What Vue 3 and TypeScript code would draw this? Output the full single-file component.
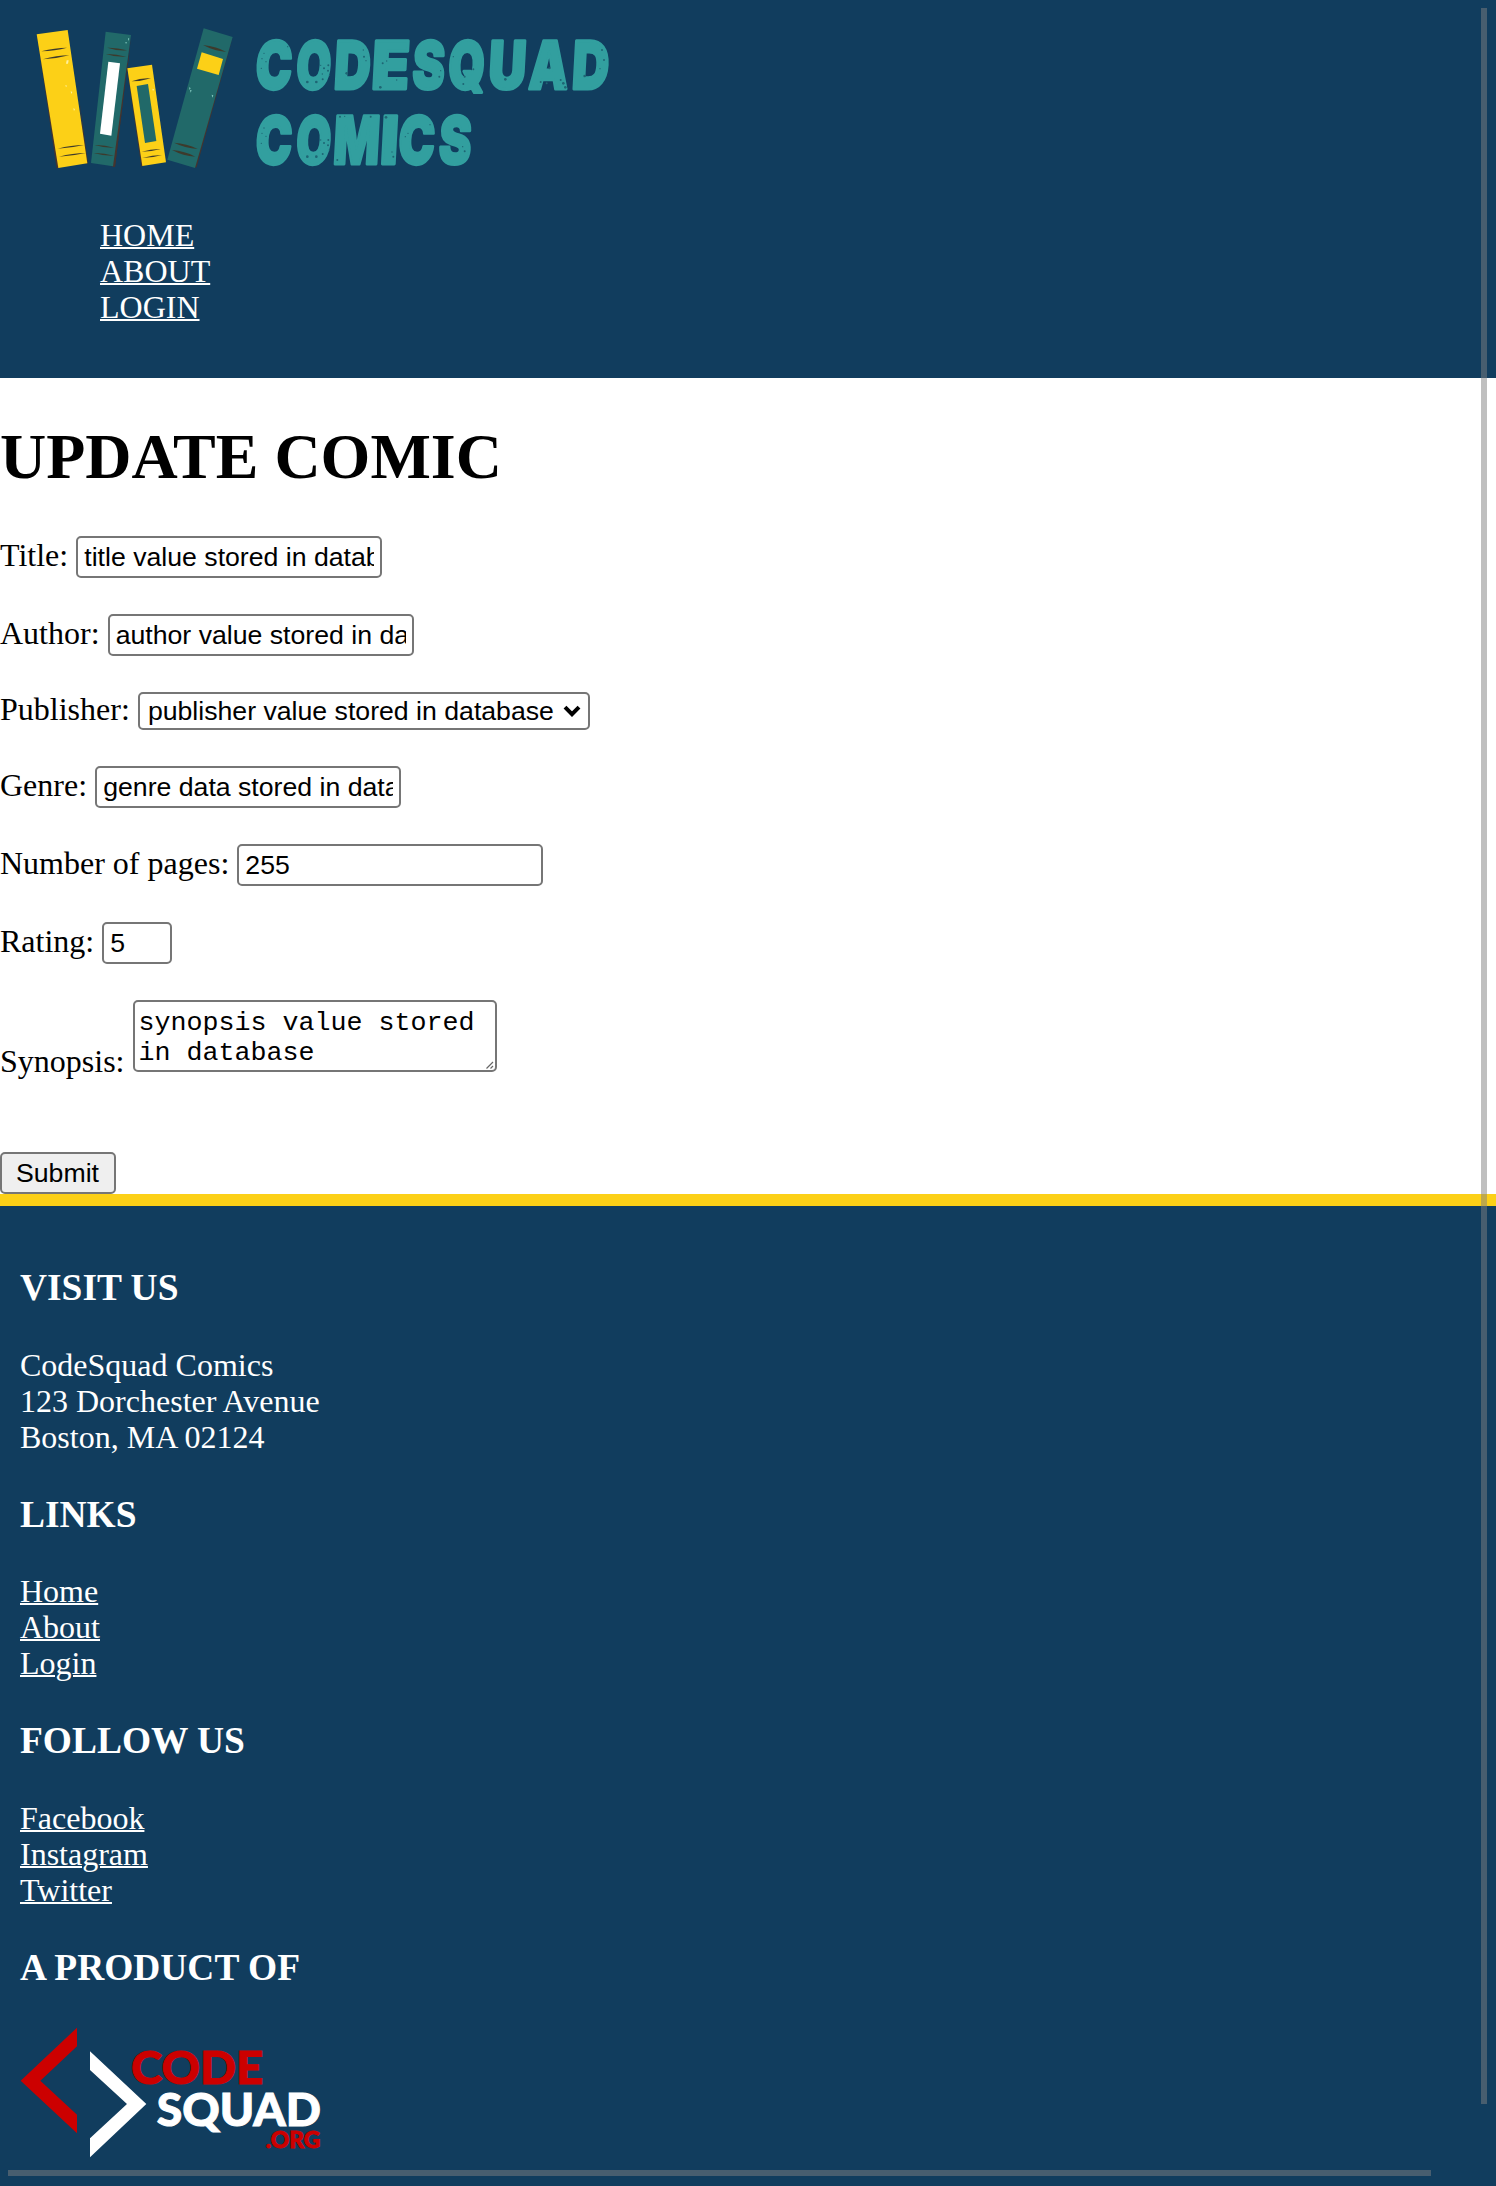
<script setup lang="ts">
import { ref } from 'vue'

const title = ref('title value stored in database')
const author = ref('author value stored in database')
const publisher = ref('publisher value stored in database')
const genre = ref('genre data stored in database')
const pages = ref(255)
const rating = ref(5)
const synopsis = ref('synopsis value stored in database')

const navLinks: string[] = ['HOME', 'ABOUT', 'LOGIN']
const siteLinks: string[] = ['Home', 'About', 'Login']
const socialLinks: string[] = ['Facebook', 'Instagram', 'Twitter']

interface Letter { ch: string; x: number; length: number }

// Share of the advance taken by the left bearing and by the ink of each letter
const metrics: Record<string, [number, number]> = {
  C: [0.045, 0.92], O: [0.045, 0.91], D: [0.07, 0.89], E: [0.09, 0.86], S: [0.04, 0.92],
  Q: [0.045, 0.91], U: [0.07, 0.86], A: [0.01, 0.98], M: [0.07, 0.86], I: [0.17, 0.66],
}
const stroke = 9
const layout = (word: string, edges: [number, number][]): Letter[] =>
  edges.map(([left, right], i) => {
    const [bearing, ink] = metrics[word[i]]
    const length = (right - left - stroke - 4) / ink
    return { ch: word[i], x: left + stroke / 2 - bearing * length, length }
  })
const lines = [
  {
    y: 268,
    letters: layout('CODESQUAD', [
      [767, 880], [888, 996], [1005, 1115], [1120, 1230], [1236, 1338],
      [1344, 1457], [1468, 1578], [1583, 1712], [1719, 1830],
    ]),
  },
  {
    y: 493,
    letters: layout('COMICS', [
      [767, 880], [888, 996], [1005, 1137], [1145, 1193], [1195, 1308], [1315, 1417],
    ]),
  },
]

// Worn print specks: x, y, radius
const specks: number[][] = [
  [786, 176, 2], [792, 160, 2], [798, 185, 2], [784, 205, 2], [863, 140, 2],
  [922, 246, 4], [949, 246, 4], [968, 238, 3], [972, 205, 3], [962, 196, 2], [985, 196, 3], [984, 212, 3], [967, 222, 2], [988, 226, 2],
  [1040, 220, 4], [1092, 170, 3], [1098, 182, 2], [1090, 150, 2], [1141, 262, 4], [1148, 190, 3], [1160, 183, 2], [1190, 240, 2],
  [1318, 230, 3], [1322, 212, 2], [1360, 170, 2], [1394, 230, 3], [1420, 208, 3], [1390, 252, 3],
  [1516, 238, 4], [1648, 205, 3], [1640, 250, 3], [1622, 246, 3], [1690, 250, 4], [1696, 262, 4], [1682, 240, 3],
  [1754, 228, 4], [1806, 150, 3], [1812, 180, 3], [1800, 206, 2],
  [786, 400, 2], [792, 384, 2], [798, 409, 2], [784, 430, 2],
  [922, 470, 4], [949, 470, 4], [968, 462, 3], [972, 429, 3], [962, 420, 2], [985, 420, 3], [984, 436, 3], [988, 450, 2],
  [1020, 350, 3], [1034, 349, 2], [1112, 350, 3], [1012, 480, 3], [1158, 352, 4], [1180, 470, 3], [1176, 456, 2],
  [1216, 410, 2], [1224, 400, 2], [1290, 374, 2], [1394, 454, 3], [1388, 440, 2],
]
</script>

<template>
  <div class="page">
    <header class="header">
      <svg class="brand" viewBox="60 60 1800 498" role="img" aria-label="CodeSquad Comics">
        <g>
          <path d="M111 106 L170 506 L180 500 L120 102Z" fill="#45342f" />
          <path d="M238 300 L264 490 L258 492Z" fill="#45342f" />
          <path d="M110 103 L203 90 L262 490 L175 504Z" fill="#fcd017" />
          <g class="band">
            <path d="M124 154 Q165 143 201 143 Q165 153 124 154Z" />
            <path d="M129 178 Q170 166 208 166 Q170 176 129 178Z" />
            <path d="M173 446 Q214 435 252 435 Q214 444 173 446Z" />
            <path d="M177 470 Q218 459 257 459 Q218 468 177 470Z" />
          </g>
          <path d="M200 181 l6 0 -2 10 -6 0Z M196 255 l5 2 -3 5Z M212 274 l5 2 -3 6Z M220 325 l5 2 -3 6Z" fill="#fff0a0" />
        </g>
        <g>
          <path d="M386 180 L393 105 L345 501 L335 499Z" fill="#45342f" />
          <path d="M383 190 L345 501 L338 499 L376 180Z" fill="#45342f" />
          <path d="M317 95 L393 105 L339 499 L273 489Z" fill="#216969" />
          <path d="M325 185 L360 190 L334 407 L300 401Z" fill="#fff" />
          <g class="band">
            <path d="M322 143 Q350 142 381 151 Q350 153 322 143Z" />
            <path d="M318 162 Q345 161 379 170 Q345 172 318 162Z" />
            <path d="M284 435 Q312 434 342 443 Q312 444 284 435Z" />
            <path d="M281 459 Q310 458 342 467 Q310 468 281 459Z" />
          </g>
          <path d="M384 114 l4 2 -3 7Z M376 126 l5 1 -3 5Z" fill="#83c9bf" />
        </g>
        <g>
          <path d="M381 205 L424 500 L430 498 L390 204Z" fill="#45342f" />
          <path d="M382 205 L456 194 L498 487 L427 498Z" fill="#fcd017" />
          <path d="M410 258 L444 252 L469 423 L435 429Z" fill="#216969" />
          <g class="band">
            <path d="M395 244 Q425 232 453 235 Q425 244 395 244Z" />
            <path d="M425 455 Q455 446 482 447 Q455 455 425 455Z" />
            <path d="M427 474 Q457 465 486 465 Q457 474 427 474Z" />
          </g>
          <path d="M457 266 l5 2 -3 6Z" fill="#fff0a0" />
        </g>
        <g>
          <path d="M698 112 L590 502 L583 503 L640 300Z" fill="#45342f" />
          <path d="M611 85 L698 111 L585 504 L502 479Z" fill="#216969" />
          <path d="M605 157 L669 177 L656 225 L591 206Z" fill="#fcd017" />
          <g class="band">
            <path d="M609 135 Q650 139 679 156 Q640 152 609 135Z" />
            <path d="M522 428 Q560 430 593 447 Q555 444 522 428Z" />
            <path d="M516 450 Q554 453 586 470 Q550 468 516 450Z" />
          </g>
          <path d="M567 262 l5 2 -3 6Z M570 270 l5 1 -3 7Z M635 284 l5 2 -3 7Z" fill="#83c9bf" />
        </g>
        <g class="wordmark">
          <text v-for="line in lines" :key="line.y" y="0" :transform="`translate(-2 ${line.y}) skewX(-3)`"><tspan
            v-for="(l, i) in line.letters" :key="i" :x="l.x" :textLength="l.length" lengthAdjust="spacingAndGlyphs"
          >{{ l.ch }}</tspan></text>
        </g>
        <circle v-for="(s, i) in specks" :key="i" :cx="s[0]" :cy="s[1]" :r="s[2]" fill="#1e6674" />
      </svg>
      <ul class="nav">
        <li v-for="link in navLinks" :key="link"><a href="#">{{ link }}</a></li>
      </ul>
    </header>

    <main>
      <h1>UPDATE COMIC</h1>
      <form @submit.prevent>
        <div class="row"><label for="title">Title:</label><input id="title" v-model="title" type="text" /></div>
        <div class="row"><label for="author">Author:</label><input id="author" v-model="author" type="text" /></div>
        <div class="row row-select">
          <label for="publisher">Publisher:</label>
          <div class="select">
            <select id="publisher" v-model="publisher">
              <option>publisher value stored in database</option>
            </select>
            <svg class="chevron" viewBox="0 0 18 12"><path d="M2 2.2 L9 9.2 L16 2.2" /></svg>
          </div>
        </div>
        <div class="row"><label for="genre">Genre:</label><input id="genre" v-model="genre" type="text" /></div>
        <div class="row"><label for="pages">Number of pages:</label><input id="pages" v-model="pages" type="number" /></div>
        <div class="row"><label for="rating">Rating:</label><input id="rating" v-model="rating" class="short" type="number" /></div>
        <div class="row row-area">
          <label for="synopsis">Synopsis:</label>
          <div class="area">
            <textarea id="synopsis" v-model="synopsis"></textarea>
            <svg class="grip" viewBox="0 0 8 8"><path d="M0.5 7.5 L7 1 M4.5 7.5 L7 5" /></svg>
          </div>
        </div>
        <button type="submit">Submit</button>
      </form>
    </main>

    <footer class="footer">
      <h3>VISIT US</h3>
      <p>CodeSquad Comics<br />123 Dorchester Avenue<br />Boston, MA 02124</p>
      <h3>LINKS</h3>
      <p><template v-for="link in siteLinks" :key="link"><a href="#">{{ link }}</a><br /></template></p>
      <h3>FOLLOW US</h3>
      <p><template v-for="link in socialLinks" :key="link"><a href="#">{{ link }}</a><br /></template></p>
      <h3>A PRODUCT OF</h3>
      <svg class="org" viewBox="60 320 910 400" role="img" aria-label="CodeSquad.org">
        <path d="M231 325 V381 L121 484 L231 586 V642 L62 484Z" fill="#c00" />
        <path d="M270 396 V452 L381 554 L270 657 V714 L439 554Z" fill="#fff" />
        <g class="org-text">
          <text x="393" y="493" font-size="139" textLength="397" lengthAdjust="spacingAndGlyphs" fill="#c00" stroke="#c00">CODE</text>
          <text x="470" y="621" font-size="139" textLength="493" lengthAdjust="spacingAndGlyphs" fill="#fff" stroke="#fff">SQUAD</text>
          <text x="797" y="685" font-size="66" textLength="164" lengthAdjust="spacingAndGlyphs" fill="#c00" stroke="#c00">.ORG</text>
        </g>
      </svg>
    </footer>

    <div class="scroll scroll-y"></div>
    <div class="scroll scroll-x"></div>
  </div>
</template>

<style>
body {
  margin: 0;
  overflow: hidden;
}
</style>

<style scoped>
.page {
  position: relative;
  display: flex;
  flex-direction: column;
  height: 2186px;
  overflow: hidden;
  background: #fff;
  color: #000;
  font-family: 'Liberation Serif', 'Times New Roman', serif;
  font-size: 32px;
  line-height: 36px;
}
.header {
  box-sizing: border-box;
  height: 378px;
  padding: 20px;
  background: #113d5e;
}
.brand {
  display: block;
  width: 600px;
  height: 166px;
}
.band {
  fill: #3d3a2c;
}
.wordmark text {
  font-family: Inter, sans-serif;
  font-weight: 900;
  font-size: 199px;
  fill: #329f9f;
  stroke: #329f9f;
  stroke-width: 9px;
  stroke-linejoin: round;
}
.nav {
  margin: 31px 0 0;
  padding: 0 0 0 80px;
  list-style: none;
}
a {
  color: #fff;
  text-decoration: underline;
  text-decoration-thickness: 2px;
}
h1 {
  margin: 42px 0 43px;
  font-size: 64px;
  line-height: 73px;
}
.row {
  display: flex;
  align-items: baseline;
  gap: 8.1px;
  height: 42px;
  margin-bottom: 36px;
}
label {
  line-height: 30px;
}
input,
select,
textarea,
button {
  box-sizing: border-box;
  margin: 0;
  border: 2px solid #767676;
  border-radius: 5px;
  background: #fff;
  color: #000;
  font-family: 'Liberation Sans', Arial, sans-serif;
  font-size: 26.67px;
  line-height: 30px;
  appearance: none;
}
input {
  width: 306px;
  height: 42px;
  padding: 4px 6px;
}
input[type='number'] {
  appearance: textfield;
}
input.short {
  width: 70px;
}
.row-select {
  height: 38px;
}
.select,
.area {
  position: relative;
  display: flex;
}
select {
  width: 452px;
  height: 38px;
  padding: 2px 8px;
}
.chevron {
  position: absolute;
  top: 13px;
  right: 9px;
  width: 18px;
  height: 12px;
  fill: none;
  stroke: #000;
  stroke-width: 4;
}
.row-area {
  height: 76px;
  margin-bottom: 76px;
  align-items: flex-start;
}
.row-area label {
  align-self: flex-end;
}
textarea {
  width: 364px;
  height: 72px;
  padding: 6px 4px 0;
  overflow: hidden;
  resize: none;
  font-family: 'Liberation Mono', 'Courier New', monospace;
}
.grip {
  position: absolute;
  right: 3px;
  bottom: 3px;
  width: 8px;
  height: 8px;
  stroke: #666;
  stroke-width: 1.2;
}
button {
  display: block;
  width: 116px;
  height: 42px;
  padding: 0 1px 0 0;
  background: #efefef;
}
.footer {
  flex: 1;
  padding: 22px 20px 0;
  border-top: 12px solid #fcd017;
  background: #113d5e;
  color: #fff;
}
.footer h3 {
  margin: 38.2px 0 36.4px;
  font-size: 37.44px;
  line-height: 44px;
}
.footer p {
  margin: 0;
}
.org {
  display: block;
  width: 303.33px;
  height: 133.33px;
}
.org-text {
  font-family: Lato, sans-serif;
  font-weight: 900;
  stroke-width: 3px;
}
.scroll {
  position: absolute;
  background: rgba(128, 128, 128, 0.5);
}
.scroll-y {
  top: 8px;
  left: 1481px;
  width: 6px;
  height: 2096px;
}
.scroll-x {
  top: 2170px;
  left: 8px;
  width: 1423px;
  height: 6px;
}
</style>
